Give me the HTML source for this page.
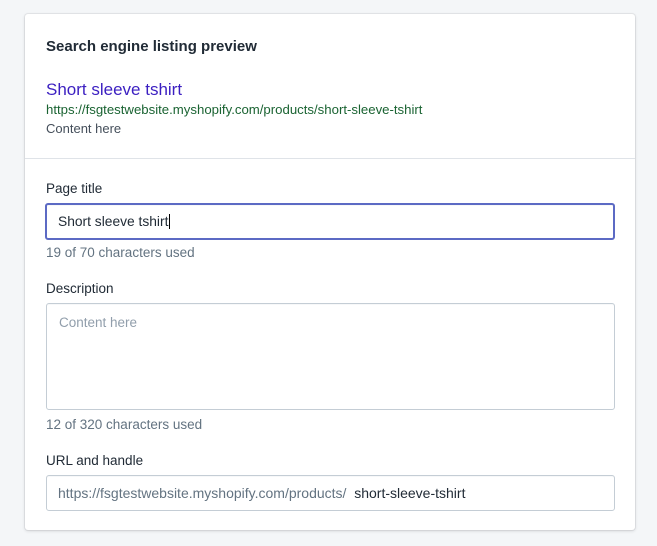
<!DOCTYPE html>
<html><head><style>
body{margin:0;background:#f4f6f8;font-family:"Liberation Sans",sans-serif;width:657px;height:546px;overflow:hidden;position:relative}
.card{position:absolute;left:25px;top:14px;width:610px;height:516px;background:#fff;border-radius:3px;box-shadow:0 0 0 1px rgba(63,63,68,.07),0 1px 3px rgba(63,63,68,.18)}
.t{position:absolute;white-space:nowrap}
.box{position:absolute;left:21px;width:567px;border:1px solid #c4cdd5;border-radius:3px;box-shadow:inset 0 1px 0 rgba(99,115,129,.05)}
</style></head><body>
<div class="card">
<div class="t" style="left:21px;top:24px;font-size:15px;font-weight:bold;color:#212b36">Search engine listing preview</div>
<div class="t" style="left:21px;top:66px;font-size:17px;color:#3b1fc1">Short sleeve tshirt</div>
<div class="t" style="left:21px;top:88px;font-size:13.2px;color:#1a6332">https://fsgtestwebsite.myshopify.com/products/short-sleeve-tshirt</div>
<div class="t" style="left:21px;top:107px;font-size:13px;color:#454f5b">Content here</div>
<div style="position:absolute;left:0;right:0;top:144px;border-top:1px solid #dfe3e8"></div>
<div class="t" style="left:21px;top:167px;font-size:13.5px;color:#212b36">Page title</div>
<div class="box" style="top:189px;height:33px;border:2px solid #5c6ac4;left:20px;width:566px"><span class="t" style="left:11px;top:9px;font-size:13.8px;color:#212b36">Short sleeve tshirt<span style="border-left:1px solid #000;margin-left:1px"></span></span></div>
<div class="t" style="left:21px;top:231px;font-size:13.5px;color:#637381">19 of 70 characters used</div>
<div class="t" style="left:21px;top:267px;font-size:13.5px;color:#212b36">Description</div>
<div class="box" style="top:289px;height:105px"><span class="t" style="left:12px;top:11px;font-size:13.5px;color:#919eab">Content here</span></div>
<div class="t" style="left:21px;top:403px;font-size:13.5px;color:#637381">12 of 320 characters used</div>
<div class="t" style="left:21px;top:439px;font-size:13.5px;color:#212b36">URL and handle</div>
<div class="box" style="top:461px;height:34px"><span class="t" style="left:11px;top:9px;font-size:14px;color:#637381">https://fsgtestwebsite.myshopify.com/products/&nbsp; <span style="color:#212b36">short-sleeve-tshirt</span></span></div>
</div>
</body></html>
